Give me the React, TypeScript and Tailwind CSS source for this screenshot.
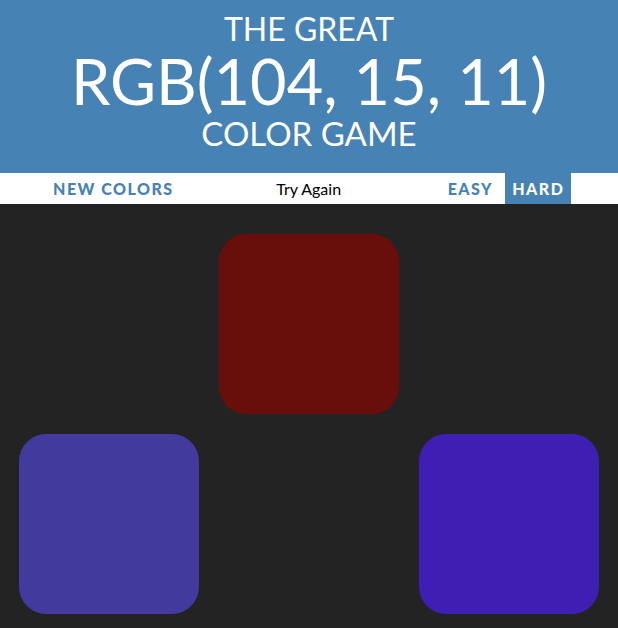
const squares = ['#232323', '#690f0b', '#232323', '#433a9e', '#232323', '#3f1fb3'];

function Header() {
  return (
    <h1 className="bg-[#4682b4] text-white text-center uppercase font-normal h-[173px] flex flex-col items-center pt-[10px]">
      <span className="block text-[32px] leading-[38px]">The Great</span>
      <span className="block text-[63px] leading-[66px]">RGB(104, 15, 11)</span>
      <span className="block text-[33px] leading-[39px]">Color Game</span>
    </h1>
  );
}

function Stripe() {
  return (
    <div className="bg-white h-[31px] flex items-stretch text-[16px] whitespace-nowrap">
      <button className="ml-[46px] px-[7px] uppercase font-black tracking-[1.5px] text-[#4682b4]">New Colors</button>
      <span className="ml-[66px] w-[124px] flex items-center justify-center text-black text-[16px]">Try Again</span>
      <button className="ml-[70px] px-[7px] uppercase font-black tracking-[1.5px] text-[#4682b4]">Easy</button>
      <button className="ml-[5px] px-[7px] uppercase font-black tracking-[1.5px] text-white bg-[#4682b4]">Hard</button>
    </div>
  );
}

export default function App() {
  return (
    <div className="min-h-[628px] bg-[#232323] font-['Lato',sans-serif]">
      <Header />
      <Stripe />
      <div className="w-[600px] mx-auto mt-5 p-[10px] grid grid-cols-3 gap-5">
        {squares.map((c, i) => (
          <div key={i} className="w-[180px] h-[180px] rounded-[27px]" style={{ backgroundColor: c }} />
        ))}
      </div>
    </div>
  );
}
